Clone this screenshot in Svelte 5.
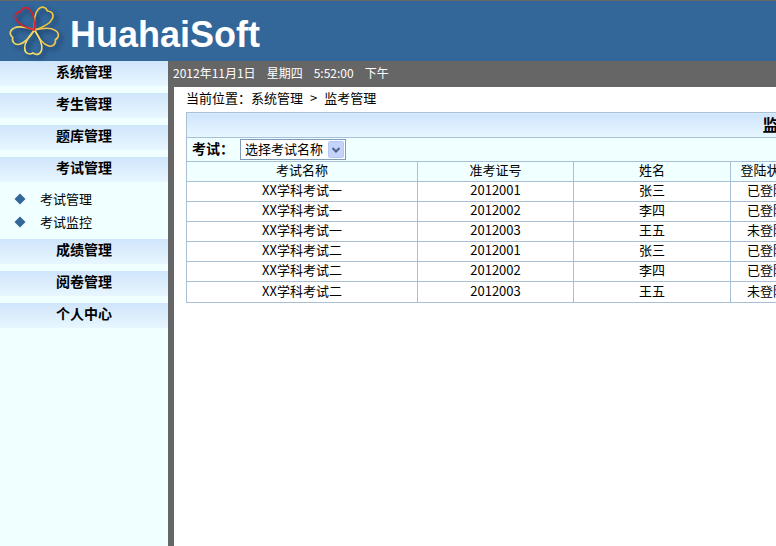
<script lang="ts">
	type Exam = { name: string; ticket: string; student: string; status: string };

	const menu = [
		{ title: '系统管理', items: [] },
		{ title: '考生管理', items: [] },
		{ title: '题库管理', items: [] },
		{ title: '考试管理', items: ['考试管理', '考试监控'] },
		{ title: '成绩管理', items: [] },
		{ title: '阅卷管理', items: [] },
		{ title: '个人中心', items: [] },
	];

	const students = [
		{ ticket: '2012001', student: '张三', status: '已登陆' },
		{ ticket: '2012002', student: '李四', status: '已登陆' },
		{ ticket: '2012003', student: '王五', status: '未登陆' },
	];

	const rows: Exam[] = ['XX学科考试一', 'XX学科考试二'].flatMap((name) =>
		students.map((s) => ({ name, ...s }))
	);

	const petals = [
		{ angle: 34, color: '#f2c93a' },
		{ angle: 115, color: '#f0c850' },
		{ angle: 184, color: '#f3dc68' },
		{ angle: -109, color: '#eed860' },
		{ angle: -37, color: '#d8202c' },
	];
	const petal = 'M0 0C-4 -5 -9.5 -12 -8.5 -19C-8 -24 -3.5 -25.5 0 -23C3.5 -25.5 8 -24 8.5 -19C9.5 -12 4 -5 0 0Z';

	let selected = $state('');
</script>

<div class="page">
	<header class="banner">
		<svg class="logo" viewBox="0 0 64 60" aria-hidden="true">
			{#each petals as p (p.angle)}
				<path class="petal" d={petal} stroke={p.color} transform="translate(34.5 29) rotate({p.angle})" />
			{/each}
		</svg>
		<span class="brand">HuahaiSoft</span>
	</header>

	<nav class="sidebar">
		{#each menu as group (group.title)}
			<button class="menu-title" type="button">{group.title}</button>
			{#if group.items.length > 0}
				<ul class="submenu">
					{#each group.items as item (item)}
						<li>
							<svg class="bullet" viewBox="0 0 12 12" aria-hidden="true">
								<path d="M6 0.5L11.5 6L6 11.5L0.5 6Z" />
							</svg>
							<a href="#top">{item}</a>
						</li>
					{/each}
				</ul>
			{/if}
		{/each}
	</nav>

	<div class="status">
		<span>2012年11月1日</span>
		<span>星期四</span>
		<span>5:52:00</span>
		<span>下午</span>
	</div>

	<main class="content">
		<div class="crumbs">
			<span>当前位置：系统管理</span>
			<span>&gt;</span>
			<span>监考管理</span>
		</div>

		<table class="exams">
			<colgroup>
				<col class="col-name" />
				<col class="col-ticket" />
				<col class="col-student" />
				<col class="col-status" />
				<col />
			</colgroup>
			<thead>
				<tr class="title-row"><th colspan="5">监考管理</th></tr>
				<tr class="filter-row">
					<td colspan="5">
						<div class="filter">
							<label for="exam">考试：</label>
							<span class="picker">
								<select id="exam" bind:value={selected}>
									<option value="">选择考试名称</option>
									<option>XX学科考试一</option>
									<option>XX学科考试二</option>
								</select>
								<svg class="arrow" viewBox="0 0 16 17" aria-hidden="true">
									<rect x="0.5" y="0.5" width="15" height="16" rx="1.5" fill="#c3d3fb" stroke="#b5c8f5" />
									<path d="M4.5 7L8 10.5L11.5 7" fill="none" stroke="#4d6185" stroke-width="2" />
								</svg>
							</span>
						</div>
					</td>
				</tr>
				<tr class="head-row">
					<th>考试名称</th>
					<th>准考证号</th>
					<th>姓名</th>
					<th>登陆状态</th>
					<th></th>
				</tr>
			</thead>
			<tbody>
				{#each rows as row (row.name + row.ticket)}
					<tr>
						<td>{row.name}</td>
						<td>{row.ticket}</td>
						<td>{row.student}</td>
						<td>{row.status}</td>
						<td></td>
					</tr>
				{/each}
			</tbody>
		</table>
	</main>
</div>

<style>
:global(body) { margin: 0; background: #fff; }

.page {
	display: grid;
	grid-template-columns: 168px minmax(0, 1fr);
	grid-template-rows: 61px 26px 1fr;
	min-height: 100vh;
	font-family: "Noto Sans CJK SC", sans-serif;
	font-size: 13px; line-height: 18px; color: #000;
}

.banner {
	grid-column: 1 / -1;
	display: flex; align-items: center;
	box-sizing: border-box;
	background: #336699;
	border-top: 1px solid #666;
}
.logo { width: 64px; height: 60px; margin-right: 6px; flex-shrink: 0; overflow: visible; filter: drop-shadow(3px 3px 2px rgba(10,30,60,.6)); }
.petal { fill: none; stroke-width: 1.6; }
.brand {
	font: bold 36px/44px "Liberation Sans", Arial, sans-serif;
	color: #fff; padding-top: 8px;
}

.sidebar {
	grid-row: 2 / 4;
	background: #f0ffff;
}
.menu-title {
	display: block; width: 100%; height: 25px;
	margin: 0 0 7px; padding: 0 0 5px;
	border: none; cursor: pointer;
	background: linear-gradient(#cfe5fb, #e8f7ff);
	font-family: inherit; font-size: 14px; font-weight: 700; line-height: 20px; color: #000;
}
.submenu { list-style: none; margin: 0; padding: 0 0 4px 14px; }
.submenu li { display: flex; align-items: center; gap: 14px; height: 23px; }
.submenu a { color: #000; text-decoration: none; padding-bottom: 3px; }
.bullet { width: 12px; height: 12px; margin-bottom: 3px; fill: #336699; }

.status {
	display: flex; align-items: center; gap: 11px;
	padding: 0 5px 3px;
	background: #666; color: #fff;
	font-size: 12px;
}

.content {
	overflow: hidden;
	padding: 2px 0 0 12px;
	border-left: 6px solid #666;
}
.crumbs { display: flex; gap: 7px; margin-bottom: 5px; }

.exams {
	width: 1217px;
	table-layout: fixed;
	border-collapse: collapse;
	text-align: center;
}
.exams th, .exams td {
	height: 16px; padding: 0 0 3px;
	border: 1px solid #a9bfd3;
	font-weight: 400; line-height: 16px;
}
.exams tbody tr:last-child td { height: 17px; }
.col-name { width: 231px; }
.col-ticket { width: 156px; }
.col-student { width: 157px; }
.col-status { width: 72px; }

.exams .title-row th {
	height: 21px;
	background: linear-gradient(#cfe5fb, #e8f7ff);
	font-size: 16px; font-weight: 700; line-height: 20px;
}
.exams .filter-row td { height: 23px; padding: 0; background: #f0ffff; }
.head-row { background: #f0ffff; }

.filter { display: flex; align-items: center; gap: 6px; padding-left: 5px; }
.filter label { font-weight: 700; font-size: 14px; padding-bottom: 3px; }
.picker { display: grid; width: 106px; }
.picker select {
	grid-area: 1 / 1;
	appearance: none;
	box-sizing: border-box; width: 100%; height: 21px;
	margin: 0; padding: 0 20px 2px 4px;
	border: 1px solid #7f9db9; border-radius: 0;
	background: #fff; color: #000;
	font-family: inherit; font-size: 13px; line-height: 17px;
}
.arrow {
	grid-area: 1 / 1;
	justify-self: end; align-self: center;
	width: 16px; height: 17px; margin-right: 2px;
	pointer-events: none;
}
</style>
